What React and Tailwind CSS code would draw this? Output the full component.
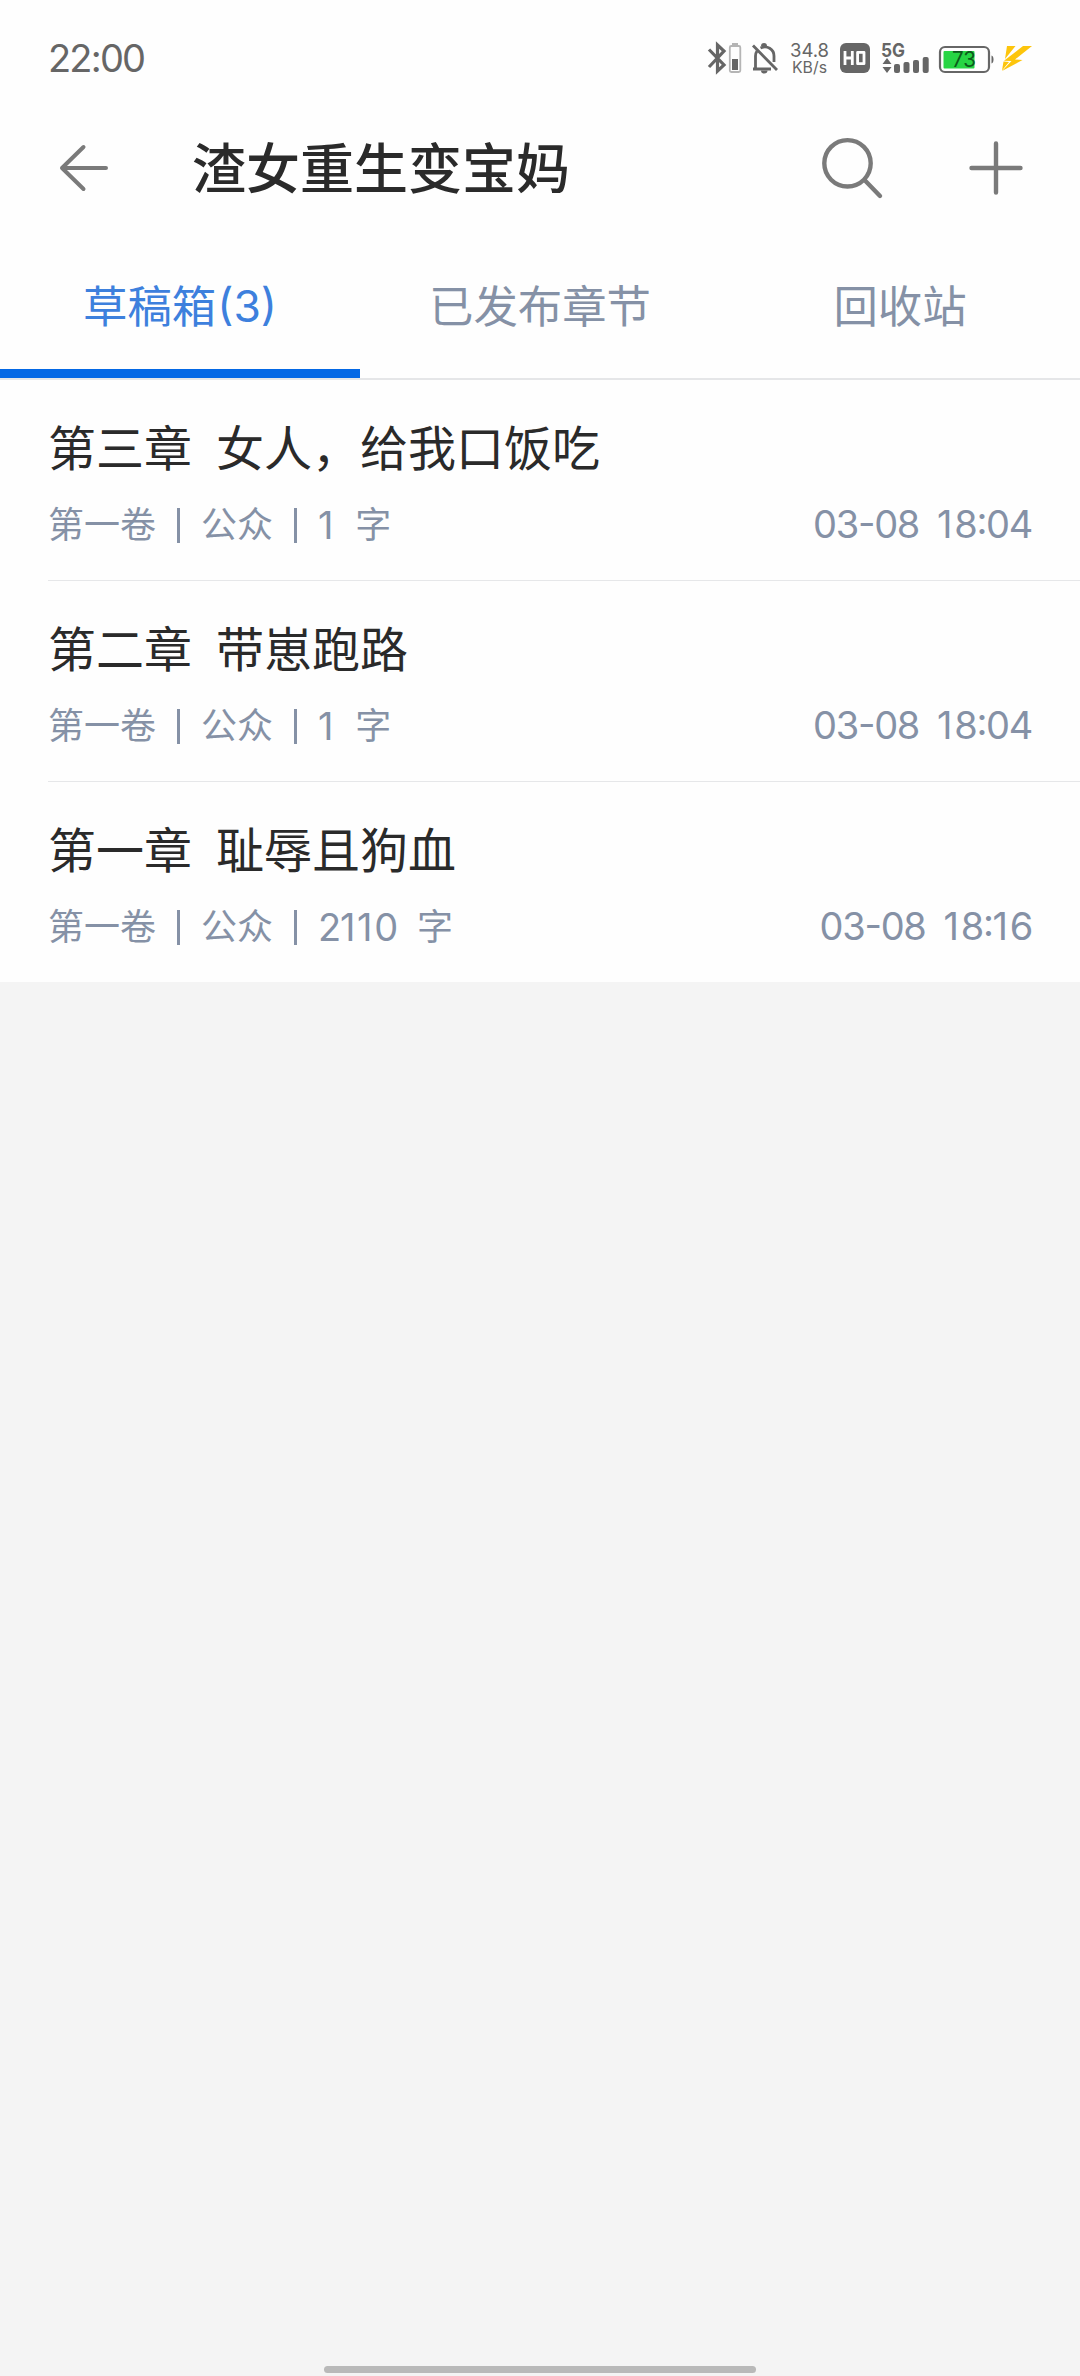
const chapters = [
  { id: 3, title: ["第三章", "女人，给我口饭吃"], words: "1", date: "03-08", time: "18:04" },
  { id: 2, title: ["第二章", "带崽跑路"], words: "1", date: "03-08", time: "18:04" },
  { id: 1, title: ["第一章", "耻辱且狗血"], words: "2110", date: "03-08", time: "18:16" },
];

const tabs = [{ name: "草稿箱", count: 3 }, { name: "已发布章节" }, { name: "回收站" }];

// digits are set tight, only the narrow "1" keeps some room after it
function Digits({ value }) {
  return (
    <span className="text-[38px] tracking-[-1.3px] font-[Inter,sans-serif] [font-feature-settings:'case']">
      {value.split("").map((char, i) => (
        <span key={i} className={char === "1" ? "tracking-[1.7px]" : ""}>{char}</span>
      ))}
    </span>
  );
}

function StatusIcons() {
  return (
    <svg width="330" height="36" viewBox="705 40 330 36" fill="none">
      {/* bluetooth + device battery */}
      <path d="M709 49.5L724 65L717.5 71V45L724 51L709 67" stroke="#666" strokeWidth="3.2" />
      <rect x="729.8" y="46" width="10.5" height="26" rx="1.5" stroke="#b5b5b5" strokeWidth="1.8" />
      <rect x="732" y="43" width="6" height="2.5" fill="#b5b5b5" />
      <rect x="732" y="59" width="6" height="11" fill="#666" />

      {/* muted bell */}
      <path d="M755.5 68V56C755.5 54 756 52.5 757 51" stroke="#666" strokeWidth="2.8" />
      <path d="M760.5 48C767 45 774 49 774 56V62" stroke="#666" strokeWidth="2.8" />
      <path d="M753 69H771M753 45.5L777 70" stroke="#666" strokeWidth="2.8" />
      <path d="M761 46A3 3 0 0 1 767 46ZM761 70.5H767.5A3.2 3 0 0 1 761 70.5Z" fill="#666" />

      {/* network speed */}
      <g fill="#666" fontFamily="Inter, sans-serif">
        <text x="790" y="57" fontSize="18.5" textLength="39">34.8</text>
        <text x="792" y="72.5" fontSize="15.5" textLength="35" lengthAdjust="spacingAndGlyphs">KB/s</text>
      </g>

      {/* HD voice */}
      <rect x="840" y="43" width="30" height="30" rx="6" fill="#666" />
      <path d="M845 51V65M852.3 51V65M845 58H852.3M857.6 52.3H864V63.7H857.6Z" stroke="#fff" strokeWidth="2.8" strokeLinejoin="round" />

      {/* 5G signal */}
      <text x="881" y="57" fontSize="19" fontWeight="700" fill="#666" fontFamily="Inter, sans-serif" textLength="24" lengthAdjust="spacingAndGlyphs">5G</text>
      <path d="M887 58L891.5 64H882.5ZM887 73L891.5 67H882.5Z" fill="#666" />
      <rect x="894" y="64" width="6" height="9" rx="2" fill="#666" />
      <rect x="903.5" y="62" width="6" height="11" rx="2" fill="#666" />
      <rect x="913" y="60" width="6" height="13" rx="2" fill="#666" />
      <rect x="922.7" y="57" width="6" height="16" rx="2" fill="#666" />

      {/* battery */}
      <rect x="940" y="47" width="49" height="25" rx="5" stroke="#666" strokeWidth="2.2" />
      <path d="M991.5 55.5Q993.5 56 993.5 59.5T991.5 63.5Z" fill="#666" />
      <rect x="943.5" y="51" width="31" height="17.5" rx="1" fill="#27d544" />
      <text x="952" y="67.3" fontSize="21" fill="#0c5b1b" fontFamily="Inter, sans-serif" textLength="24" lengthAdjust="spacingAndGlyphs">73</text>
      <path d="M1007 46H1015.5L1005 59ZM1023 46H1032L1015 59.5L1022.5 60L1002 71L1011.5 61L1004 60.8Z" fill="#fdc50c" />
      <path d="M1003.5 61.5L1009 62L1002 70.5Z" fill="#fdc50c" />
    </svg>
  );
}

function StatusBar() {
  return (
    <div className="flex h-[116px] items-center justify-between pl-12 pr-[45px]">
      <span className="text-[38px] leading-none tracking-[-1.8px] text-[#666] font-[Inter,sans-serif]">22:00</span>
      <StatusIcons />
    </div>
  );
}

function Header() {
  return (
    <header className="flex h-[104px] items-center pl-[58px] pr-[54px]">
      <svg width="52" height="52" viewBox="0 0 52 52" fill="none" stroke="#7a7a7a" strokeWidth="4" strokeLinecap="round" strokeLinejoin="round">
        <path d="M25.5 5L4 26L25.5 47M4 26H48" />
      </svg>
      <h1 className="ml-[82px] flex-1 pb-1 text-[54px] leading-none font-medium text-[#2a2a2a]">渣女重生变宝妈</h1>
      <svg width="64" height="64" viewBox="0 0 64 64" fill="none" stroke="#7a7a7a" strokeWidth="4.4" strokeLinecap="round" className="mr-[82px]">
        <circle cx="27.5" cy="27.3" r="23.2" />
        <path d="M45 44.5L60 60" />
      </svg>
      <svg width="60" height="60" viewBox="0 0 60 60" stroke="#7a7a7a" strokeWidth="4.4" strokeLinecap="round">
        <path d="M30 5.5V54.5M5.5 30H54.5" />
      </svg>
    </header>
  );
}

function Tabs() {
  return (
    <nav className="grid h-[160px] grid-cols-3 border-b-2 border-[#e5e6e8] text-[44.4px]">
      {tabs.map((tab, i) => (
        <div
          key={tab.name}
          className={
            i === 0
              ? "flex items-center justify-center border-b-[9px] border-[#0468e5] pt-[20px] text-[#3d80dd]"
              : "flex items-center justify-center pt-[20px] pb-[9px] text-[#8591a6]"
          }
        >
          <span>{tab.name}</span>
          {tab.count && <span className="pt-[3px] pl-px font-[Inter,sans-serif]">({tab.count})</span>}
        </div>
      ))}
    </nav>
  );
}

function Chapter({ chapter, last }) {
  return (
    <li className="pl-12">
      <div className={last ? "h-[200px] pt-[37px] pr-12" : "h-[201px] border-b border-[#e6e7e9] pt-[37px] pr-12"}>
        <h2 className="flex gap-6 text-[48px] leading-[56px] text-[#2a2a2a]">
          <span>{chapter.title[0]}</span>
          <span>{chapter.title[1]}</span>
        </h2>
        <div className="mt-[24px] flex items-center justify-between text-[36px] leading-[44px] text-[#8591a6]">
          <div className="flex items-center">
            <span>第一卷</span>
            <span className="mx-[21px] mt-[7px] h-[35px] w-[3px] bg-[#8591a6]" />
            <span>公众</span>
            <span className="mt-[7px] mr-[21px] ml-[21px] h-[35px] w-[3px] bg-[#8591a6]" />
            <span className="mr-[20px] pt-1">
              <Digits value={chapter.words} />
            </span>
            <span>字</span>
          </div>
          <div className="flex gap-[18px] pt-1">
            <Digits value={chapter.date} />
            <Digits value={chapter.time} />
          </div>
        </div>
      </div>
    </li>
  );
}

export default function App() {
  return (
    <div className="flex h-[2376px] w-[1080px] flex-col bg-[#f4f4f4] font-['Noto_Sans_CJK_SC',sans-serif]">
      <div className="bg-[#fefefe]">
        <StatusBar />
        <Header />
        <Tabs />
        <ul>
          {chapters.map((chapter, i) => (
            <Chapter key={chapter.id} chapter={chapter} last={i === chapters.length - 1} />
          ))}
        </ul>
      </div>
      {/* gesture bar */}
      <div className="mx-auto mt-auto mb-[3px] h-[7px] w-[432px] rounded-full bg-[#b9b9b9]" />
    </div>
  );
}
